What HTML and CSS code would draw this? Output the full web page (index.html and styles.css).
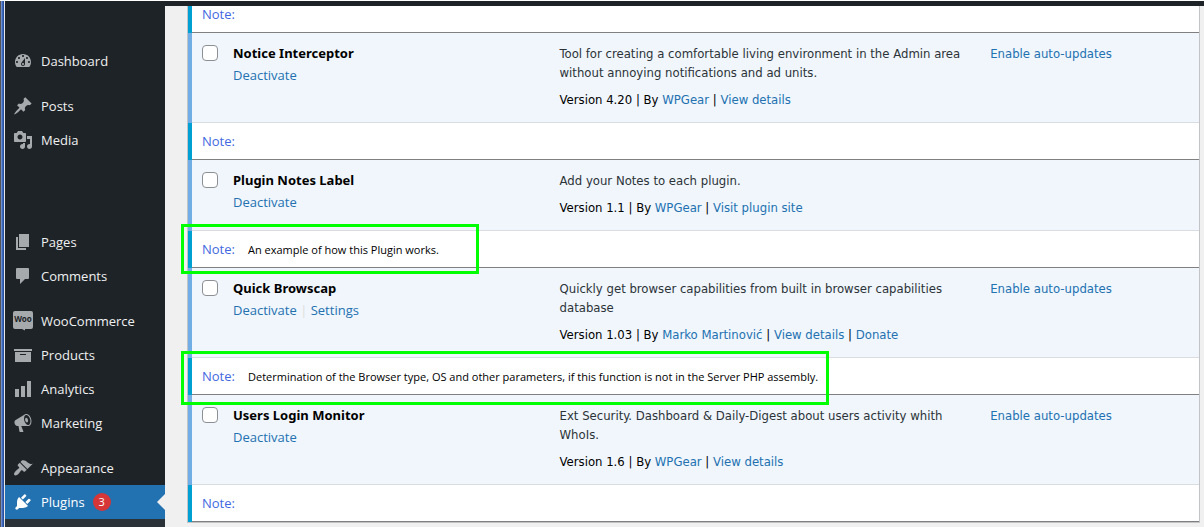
FILE: index.html
```html
<!DOCTYPE html>
<html lang="en">
<head>
<meta charset="utf-8">
<title>Plugins</title>
<link rel="stylesheet" href="styles.css">
</head>
<body>
<div class="frame">
  <header class="adminbar"></header>
  <nav class="sidebar" aria-label="Main menu">
    <a class="item" href="#"><svg class="icon" viewBox="0 0 20 20"><path fill-rule="evenodd" d="M3.76 16h12.48c1.1-1.37 1.76-3.11 1.76-5 0-4.42-3.58-8-8-8s-8 3.58-8 8c0 1.89.66 3.63 1.76 5zM10 4c.55 0 1 .45 1 1s-.45 1-1 1-1-.45-1-1 .45-1 1-1zM6 6c.55 0 1 .45 1 1s-.45 1-1 1-1-.45-1-1 .45-1 1-1zm8 0c.55 0 1 .45 1 1s-.45 1-1 1-1-.45-1-1 .45-1 1-1zm-5.370 5.550L12 7v6c0 1.100-.9 2-2 2s-2-.9-2-2c0-.57.24-1.080.63-1.450zM4 10c.55 0 1 .45 1 1s-.45 1-1 1-1-.45-1-1 .45-1 1-1zm12 0c.55 0 1 .45 1 1s-.45 1-1 1-1-.45-1-1 .45-1 1-1zm-5 3c0-.55-.45-1-1-1s-1 .45-1 1 .45 1 1 1 1-.45 1-1z"/></svg>Dashboard</a>
    <a class="item spaced" href="#"><svg class="icon" viewBox="0 0 20 20"><path d="M10.44 3.02l1.82-1.82 6.36 6.35-1.83 1.82c-1.05-.68-2.48-.57-3.41.36l-.75.75c-.92.93-1.04 2.35-.35 3.41l-1.83 1.82-2.41-2.41-2.8 2.79c-.42.42-3.38 2.71-3.8 2.29s1.86-3.39 2.28-3.81l2.79-2.79L4.1 9.36l1.83-1.82c1.05.69 2.48.57 3.4-.36l.75-.75c.93-.92 1.05-2.35.36-3.41z"/></svg>Posts</a>
    <a class="item" href="#"><svg class="icon" viewBox="0 0 20 20"><path fill-rule="evenodd" d="M13 11V4c0-.55-.45-1-1-1h-1.67L9 1H5L3.67 3H2c-.55 0-1 .45-1 1v7c0 .55.45 1 1 1h10c.55 0 1-.45 1-1zM7 4.5c1.38 0 2.5 1.12 2.5 2.5S8.38 9.5 7 9.5 4.5 8.38 4.5 7 5.62 4.5 7 4.5zM14 6h5v10.5c0 1.38-1.12 2.5-2.5 2.5S14 17.88 14 16.5s1.12-2.5 2.5-2.5c.17 0 .34.02.5.05V9h-3V6zm-4 8.05V13h2v3.5c0 1.38-1.12 2.5-2.5 2.5S7 17.88 7 16.5 8.12 14 9.5 14c.17 0 .34.02.5.05z"/></svg>Media</a>
    <a class="item group" href="#"><svg class="icon" viewBox="0 0 20 20"><path d="M6 15V2h10v13H6zm-1 1h8v2H3V5h2v11z"/></svg>Pages</a>
    <a class="item" href="#"><svg class="icon" viewBox="0 0 20 20"><path d="M4 2h11a1 1 0 0 1 1 1v9a1 1 0 0 1-1 1h-3l-5 5v-5H4a1 1 0 0 1-1-1V3a1 1 0 0 1 1-1z"/></svg>Comments</a>
    <a class="item spaced" href="#"><svg class="icon" viewBox="0 0 20 20"><path d="M2 0h16a2 2 0 0 1 2 2v14a2 2 0 0 1-2 2h-6v1.500L9 18H2a2 2 0 0 1-2-2V2a2 2 0 0 1 2-2z"/><text class="woo" x="10" y="11" text-anchor="middle">Woo</text></svg>WooCommerce</a>
    <a class="item" href="#"><svg class="icon" viewBox="0 0 20 20"><path fill-rule="evenodd" d="M19 4v2H1V4h18zM2 7h16v10H2V7zm11 3V9H7v1h6z"/></svg>Products</a>
    <a class="item" href="#"><svg class="icon" viewBox="0 0 20 20"><path d="M18 18V2h-4v16h4zm-6 0V7H8v11h4zm-6 0v-8H2v8h4z"/></svg>Analytics</a>
    <a class="item" href="#"><svg class="icon" viewBox="0 0 20 20"><path fill-rule="evenodd" d="M18.15 5.94c.46 1.62.38 3.22-.02 4.48-.42 1.28-1.26 2.18-2.3 2.48-.16.06-.26.06-.4.06-.06.02-.12.02-.18.02-.06.02-.14.02-.22.02h-6.8l2.22 5.5c.02.14-.06.26-.14.34-.08.1-.24.16-.34.16H6.95c-.1 0-.26-.06-.34-.16-.08-.08-.16-.2-.14-.34l-1-5.5H4.25l-.02-.02c-.5.06-1.08-.18-1.54-.62s-.88-1.08-1.06-1.88c-.24-.8-.2-1.56-.02-2.2.18-.62.58-1.08 1.06-1.3l.02-.02 9-5.4c.1-.06.18-.1.24-.16.06-.04.14-.08.24-.12.16-.08.28-.12.5-.18 1.04-.3 2.24.1 3.22.98s1.84 2.24 2.26 3.86zm-2.58 5.98h-.02c.4-.1.74-.34 1.04-.7.58-.7.86-1.76.86-3.04 0-.64-.1-1.3-.28-1.98-.34-1.36-1.02-2.5-1.78-3.24s-1.68-1.1-2.46-.88c-.82.22-1.4.96-1.7 2-.32 1.04-.28 2.36.06 3.72.38 1.36 1 2.5 1.8 3.24.78.74 1.62 1.1 2.48.88zm-2.54-7.08c.22-.04.42-.02.62.04.38.16.76.48 1.02 1s.42 1.2.42 1.78c0 .3-.04.56-.12.8-.18.48-.44.84-.86.94-.34.1-.8-.06-1.14-.4s-.64-.86-.78-1.5c-.18-.62-.12-1.24.02-1.72s.48-.84.82-.94z"/></svg>Marketing</a>
    <a class="item spaced" href="#"><svg class="icon" viewBox="0 0 20 20"><path d="M14.48 11.06L7.41 3.99l1.5-1.5c.5-.56 2.3-.47 3.51.32 1.21.8 1.43 1.28 2.91 2.1 1.18.64 2.45 1.26 4.45.85zm-.71.71L6.7 4.7 4.93 6.47c-.39.39-.39 1.02 0 1.41l1.06 1.06c.39.39.39 1.03 0 1.42-.6.6-1.43 1.11-2.21 1.69-.35.26-.7.53-1.01.84C1.43 14.23.4 16.08 1.4 17.07c.99 1 2.84-.03 4.18-1.36.31-.31.58-.66.85-1.02.57-.78 1.08-1.61 1.69-2.21.39-.39 1.02-.39 1.41 0l1.06 1.06c.39.39 1.02.39 1.41 0z"/></svg>Appearance</a>
    <a class="item current" href="#" aria-current="page"><svg class="icon" viewBox="0 0 20 20"><path d="M13.11 4.36L9.87 7.6 8 5.73l3.24-3.24c.35-.34 1.05-.2 1.56.32.52.51.66 1.21.31 1.55zm-8 1.77l.91-1.12 9.01 9.01-1.19.84c-.71.71-2.63 1.16-3.82 1.16H6.14L4.9 17.26c-.59.59-1.54.59-2.12 0-.59-.58-.59-1.53 0-2.12l1.24-1.24v-3.88c0-1.13.4-3.19 1.09-3.89zm7.26 3.97l3.24-3.24c.34-.35 1.04-.21 1.55.31.52.51.66 1.21.31 1.55l-3.24 3.25z"/></svg>Plugins <span class="count">3</span></a>
    <div class="submenu"></div>
  </nav>
  <main class="content">
    <table class="plugins">
      <colgroup><col class="col-check"><col class="col-name"><col class="col-desc"><col></colgroup>
      <tbody>
        <tr class="note"><td colspan="4"><span class="label">Note:</span></td></tr>
        <tr class="plugin">
          <td class="check"><input type="checkbox" id="p1"></td>
          <td><label class="name" for="p1">Notice Interceptor</label><div class="actions"><a href="#">Deactivate</a></div></td>
          <td><p class="desc">Tool for creating a comfortable living environment in the Admin area without annoying notifications and ad units.</p><div class="meta">Version 4.20 | By <a href="#">WPGear</a> | <a href="#">View details</a></div></td>
          <td><a href="#">Enable auto-updates</a></td>
        </tr>
        <tr class="note"><td colspan="4"><span class="label">Note:</span></td></tr>
        <tr class="plugin">
          <td class="check"><input type="checkbox" id="p2"></td>
          <td><label class="name" for="p2">Plugin Notes Label</label><div class="actions"><a href="#">Deactivate</a></div></td>
          <td><p class="desc">Add your Notes to each plugin.</p><div class="meta">Version 1.1 | By <a href="#">WPGear</a> | <a href="#">Visit plugin site</a></div></td>
          <td></td>
        </tr>
        <tr class="note"><td colspan="4"><span class="label">Note:</span><span class="text">An example of how this Plugin works.</span><div class="marker marker-short"></div></td></tr>
        <tr class="plugin">
          <td class="check"><input type="checkbox" id="p3"></td>
          <td><label class="name" for="p3">Quick Browscap</label><div class="actions"><a href="#">Deactivate</a> <span class="sep">|</span> <a href="#">Settings</a></div></td>
          <td><p class="desc">Quickly get browser capabilities from built in browser capabilities database</p><div class="meta">Version 1.03 | By <a href="#">Marko Martinović</a> | <a href="#">View details</a> | <a href="#">Donate</a></div></td>
          <td><a href="#">Enable auto-updates</a></td>
        </tr>
        <tr class="note"><td colspan="4"><span class="label">Note:</span><span class="text">Determination of the Browser type, OS and other parameters, if this function is not in the Server PHP assembly.</span><div class="marker marker-long"></div></td></tr>
        <tr class="plugin">
          <td class="check"><input type="checkbox" id="p4"></td>
          <td><label class="name" for="p4">Users Login Monitor</label><div class="actions"><a href="#">Deactivate</a></div></td>
          <td><p class="desc">Ext Security. Dashboard &amp; Daily-Digest about users activity whith WhoIs.</p><div class="meta">Version 1.6 | By <a href="#">WPGear</a> | <a href="#">View details</a></div></td>
          <td><a href="#">Enable auto-updates</a></td>
        </tr>
        <tr class="note"><td colspan="4"><span class="label">Note:</span></td></tr>
      </tbody>
    </table>
  </main>
</div>
</body>
</html>
```
FILE: styles.css
```css
* { box-sizing: border-box; }
body {
  margin: 0;
  font: 13px/19px "DejaVu Sans Condensed", "Open Sans", sans-serif;
  color: #000;
  background: #fff;
}
a { color: #2271b1; text-decoration: none; }

.frame {
  display: grid;
  grid-template: 5px 1fr / 160px 1fr;
  height: 100vh;
  overflow: hidden;
  padding-left: 5px;
  border-top: 1px solid #fff;
  background: linear-gradient(90deg, #555 1px, #6f8fd0 1px 2px, #4068b8 2px 3px, #2850a0 3px 4px, #e8e8e8 4px 5px, #f0f0f1 5px);
}
.adminbar { grid-column: 1 / -1; background: #1d2327; z-index: 2; }

.sidebar {
  display: flex;
  flex-direction: column;
  padding-top: 38px;
  min-height: 0;
  background: #1d2327;
}
.item {
  position: relative;
  display: flex;
  flex: none;
  align-items: center;
  height: 34px;
  padding-left: 8px;
  gap: 8px;
  font-family: "Open Sans", "Noto Sans", sans-serif;
  font-weight: 500;
  color: #f0f0f1;
}
.icon { width: 20px; height: 20px; fill: #a7aaad; }
.woo { font: bold 8px "Noto Sans", sans-serif; fill: #1d2327; }
.spaced { margin-top: 11px; }
.group { margin-top: 68px; }
.current { background: #2271b1; color: #fff; }
.current .icon { fill: #fff; }
.current::after {
  content: "";
  position: absolute;
  right: 0;
  border: 8px solid transparent;
  border-left: 0;
  border-right-color: #f0f0f1;
}
.count {
  width: 18px;
  border-radius: 9px;
  background: #d63638;
  font-size: 11px;
  line-height: 18px;
  text-align: center;
}
.submenu { flex: 1; background: #2c3338; }

.content { min-width: 0; padding: 0 4px 0 22px; }
.plugins {
  width: 100%;
  margin-top: -11px;
  table-layout: fixed;
  border-collapse: separate;
  border-spacing: 0;
  border: 1px solid #c3c4c7;
  background: #fff;
}
.col-check { width: 35px; }
.col-name { width: 32.3%; }
.col-desc { width: 42.6%; }

.plugin td {
  padding: 11px 10px 13px;
  vertical-align: top;
  background: #f0f6fc;
  border-bottom: 1px solid #d9dde2;
}
.plugin .check { position: relative; padding: 12px 0 0 14px; }
.plugin .check::before,
.note td::before {
  content: "";
  position: absolute;
  left: 0;
  top: 0;
  bottom: -1px;
  width: 4px;
  background: #72aee6;
}
.check input {
  appearance: none;
  display: block;
  width: 16px;
  height: 16px;
  margin: 0;
  border: 1px solid #8c8f94;
  border-radius: 4px;
  background: #fff;
}
.name { display: block; font-family: "Noto Sans", sans-serif; font-weight: bold; }
.actions { margin-top: 3px; font-family: "Open Sans", sans-serif; }
.sep { color: #ddd; }
.desc { margin: 0 0 8px; color: #2c3338; }

.note td {
  position: relative;
  padding: 9px 14px 8px;
  font-family: "Open Sans", sans-serif;
  border-bottom: 1px solid #808080;
}
.note td::before { background: #00a0d2; }
.label { color: #4169e1; }
.text { margin-left: 13px; font-size: 11px; }
.marker {
  position: absolute;
  z-index: 1;
  top: -7px;
  left: -7px;
  border: 3px solid #0f0;
}
.marker-short { width: 298px; height: 50px; }
.marker-long { width: 648px; height: 54px; }
```
